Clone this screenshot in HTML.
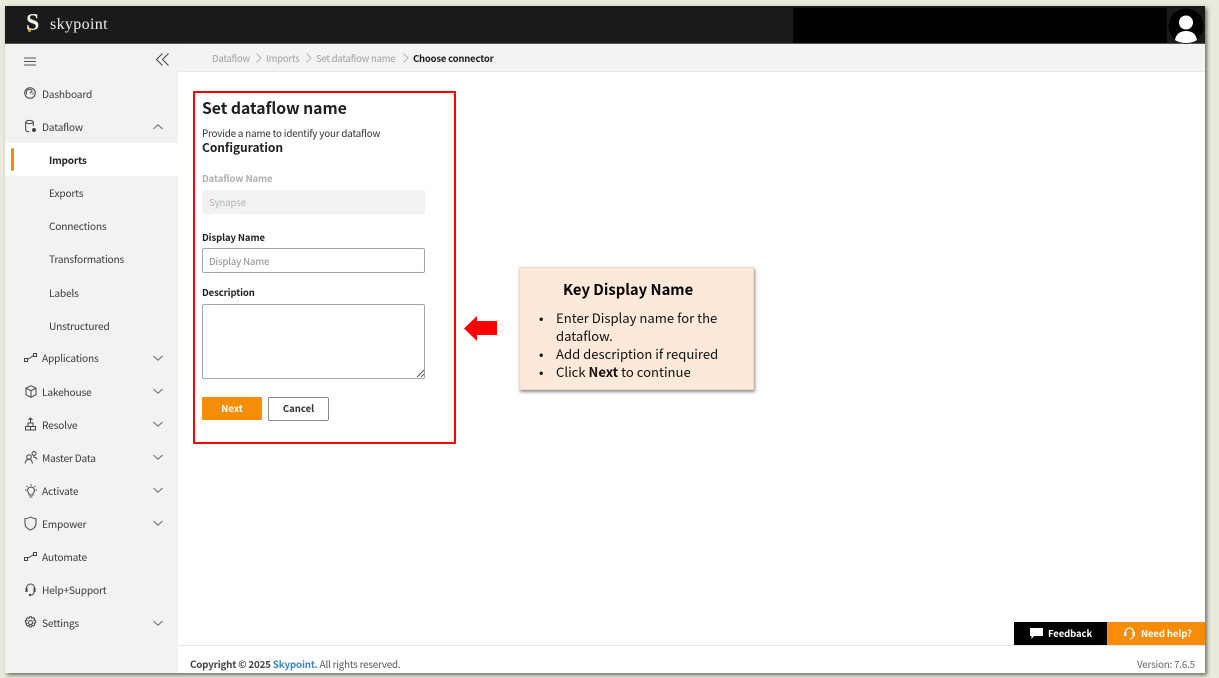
<!DOCTYPE html>
<html>
<head>
<meta charset="utf-8">
<style>
html,body{margin:0;padding:0;width:1219px;height:678px;overflow:hidden;background:#e9e9dc;}
*{box-sizing:border-box;}
body{font-family:"Noto Sans CJK JP","Liberation Sans",sans-serif;color:#323130;position:relative;}
.a{position:absolute;white-space:nowrap;line-height:16px;}
.n{font-size:10.2px;letter-spacing:-.2px;color:#3b3a39;}
.b{font-size:9.5px;letter-spacing:-.2px;color:#a19f9d;}
.l{font-size:9.500px;letter-spacing:-.1px;font-weight:700;color:#201f1e;}
.p{font-size:9.500px;letter-spacing:-.05px;}
.c{font-size:13.100px;line-height:18px;color:#111;}
svg{position:absolute;overflow:visible;}
.i{fill:none;stroke:#444;stroke-width:1;}
</style>
</head>
<body>
<!-- page frame -->
<div style="position:absolute;left:5px;top:6px;width:1200px;height:667px;background:#fff;box-shadow:2px 2px 4px rgba(0,0,0,.55);"></div>
<!-- header -->
<div style="position:absolute;left:5px;top:6px;width:1200px;height:38px;background:#1a1a1a;border-bottom:1px solid #555;"></div>
<div style="position:absolute;left:793px;top:8px;width:374px;height:35px;background:#000;"></div>
<div class="a" style="left:26px;top:9px;font:bold 24px/28px 'Liberation Serif',serif;color:#f4f0e6;">S</div>
<div style="position:absolute;left:28px;top:29px;width:3px;height:3px;border-radius:50%;background:#f7a11a;"></div>
<div class="a" style="left:50px;top:15px;font:16px/20px 'Liberation Serif',serif;color:#eee;letter-spacing:.35px;">skypoint</div>
<svg style="left:1168px;top:8px" width="36" height="36" viewBox="0 0 36 36"><circle cx="18" cy="18" r="17.500" fill="#000"/><circle cx="18" cy="14.500" r="7" fill="#fff"/><path d="M7 32c1-6 5-9 11-9s10 3 11 9c-3 2-7 3-11 3s-8-1-11-3z" fill="#fff"/></svg>

<!-- sidebar -->
<div style="position:absolute;left:5px;top:44px;width:173px;height:629px;background:#f2f2f2;"></div>
<div style="position:absolute;left:5px;top:143px;width:173px;height:33px;background:#fff;"></div>
<div style="position:absolute;left:11px;top:148px;width:3px;height:23px;background:#f78c07;border-radius:2px;"></div>

<svg style="left:24px;top:57px" width="13" height="9"><path d="M0 1h12M0 4.500h12M0 8h12" stroke="#555" stroke-width="1"/></svg>
<svg style="left:156px;top:53px" width="13" height="13" viewBox="0 0 13 13"><path d="M6.500 .5L.5 6.500l6 6M12.500 .5l-6 6 6 6" fill="none" stroke="#444"/></svg>

<div class="a n" style="left:42px;top:86px">Dashboard</div>
<div class="a n" style="left:42px;top:119px">Dataflow</div>
<div class="a n" style="left:49px;top:152px;font-weight:700;color:#222;font-size:10px">Imports</div>
<div class="a n" style="left:49px;top:185px">Exports</div>
<div class="a n" style="left:49px;top:218px">Connections</div>
<div class="a n" style="left:49px;top:251px">Transformations</div>
<div class="a n" style="left:49px;top:285px">Labels</div>
<div class="a n" style="left:49px;top:318px">Unstructured</div>
<div class="a n" style="left:42px;top:350px">Applications</div>
<div class="a n" style="left:42px;top:384px">Lakehouse</div>
<div class="a n" style="left:42px;top:417px">Resolve</div>
<div class="a n" style="left:42px;top:450px">Master Data</div>
<div class="a n" style="left:42px;top:483px">Activate</div>
<div class="a n" style="left:42px;top:516px">Empower</div>
<div class="a n" style="left:42px;top:549px">Automate</div>
<div class="a n" style="left:42px;top:582px">Help+Support</div>
<div class="a n" style="left:42px;top:615px">Settings</div>

<!-- nav icons -->
<svg style="left:24px;top:87px" width="12" height="12" viewBox="0 0 12 12"><circle class="i" cx="6" cy="6" r="5.300" stroke-width="1.200"/><path class="i" d="M3 7.500a3.200 3.200 0 0 1 5-4M9 5.500a3.200 3.200 0 0 1 0 2"/><path class="i" d="M6 6.500l2.500-3"/></svg>
<svg style="left:25px;top:120px" width="12" height="13" viewBox="0 0 12 13"><ellipse class="i" cx="4.500" cy="2" rx="3.800" ry="1.600"/><path class="i" d="M.7 2v8c0 1 1.500 1.600 3.500 1.600M8.300 2v4"/><circle cx="9" cy="10" r="2" fill="#444"/></svg>
<svg style="left:24px;top:353px" width="13" height="9" viewBox="0 0 13 9"><rect class="i" x=".5" y="5.500" width="3" height="3"/><rect class="i" x="9.500" y=".5" width="3" height="3"/><path class="i" d="M3.500 6.500L9.500 2.500"/></svg>
<svg style="left:25px;top:385px" width="12" height="13" viewBox="0 0 12 13"><path class="i" d="M6 .7l5 2.500v6.500l-5 2.600-5-2.600V3.200zM1 3.200l5 2.600 5-2.600M6 5.800v6.500"/></svg>
<svg style="left:24px;top:417px" width="13" height="14" viewBox="0 0 13 14"><path class="i" d="M6.500 6V1M4.500 3l2-2 2 2"/><rect class="i" x="4" y="6" width="5" height="3.500"/><rect class="i" x="1.500" y="9.500" width="5" height="3.500"/><rect class="i" x="6.500" y="9.500" width="5" height="3.500"/></svg>
<svg style="left:24px;top:451px" width="14" height="13" viewBox="0 0 14 13"><circle class="i" cx="5" cy="6" r="2.300"/><circle class="i" cx="10" cy="2.500" r="2"/><path class="i" d="M1 12.500c.5-3 2-4.300 4-4.300s3 1.300 3.500 4.300M9 6c2 0 3.500.5 4 2.500"/></svg>
<svg style="left:24px;top:484px" width="14" height="14" viewBox="0 0 14 14"><path class="i" d="M7 3a3.500 3.500 0 0 0-2 6.300V11h4V9.300A3.500 3.500 0 0 0 7 3zM5.500 13h3M7 0v1.500M1 6h1.500M11.500 6H13M2.500 2l1 1M11.500 2l-1 1"/></svg>
<svg style="left:24px;top:516px" width="13" height="15" viewBox="0 0 13 15"><path class="i" stroke-width="1.200" d="M6.500 1c2 1.200 3.500 1.600 5.500 1.700v5c0 3-2.300 5-5.500 6.300C3.300 12.700 1 10.700 1 7.700v-5C3 2.600 4.500 2.200 6.500 1z"/></svg>
<svg style="left:24px;top:552px" width="13" height="9" viewBox="0 0 13 9"><rect class="i" x=".5" y="5.500" width="3" height="3"/><rect class="i" x="9.500" y=".5" width="3" height="3"/><path class="i" d="M3.500 6.500L9.500 2.500"/></svg>
<svg style="left:25px;top:583px" width="11" height="14" viewBox="0 0 11 14"><path class="i" stroke-width="1.300" d="M1.500 8V5a4 4 0 0 1 8 0v3"/><rect x=".5" y="5" width="2" height="4" fill="#444"/><rect x="8.500" y="5" width="2" height="4" fill="#444"/><path class="i" d="M9 9c0 2-1.500 3-3.500 3"/><circle cx="5" cy="12" r="1.200" fill="#444"/></svg>
<svg style="left:24px;top:616px" width="13" height="13" viewBox="0 0 13 13"><circle class="i" cx="6.500" cy="6.500" r="2"/><path class="i" d="M5.500.7h2l.4 1.700 1.500-.9 1.400 1.400-.9 1.500 1.700.4v2l-1.700.4.9 1.500-1.400 1.400-1.500-.9-.4 1.700h-2l-.4-1.700-1.500.9-1.400-1.400.9-1.500-1.700-.4v-2l1.700-.4-.9-1.500 1.400-1.400 1.500.9z"/></svg>

<!-- chevrons -->
<svg style="left:153px;top:124px" width="10" height="6"><path d="M.5 5L5 .8 9.500 5" fill="none" stroke="#666"/></svg>
<svg style="left:153px;top:355px" width="10" height="6"><path d="M.5 1L5 5.200 9.500 1" fill="none" stroke="#666"/></svg>
<svg style="left:153px;top:388px" width="10" height="6"><path d="M.5 1L5 5.200 9.500 1" fill="none" stroke="#666"/></svg>
<svg style="left:153px;top:421px" width="10" height="6"><path d="M.5 1L5 5.200 9.500 1" fill="none" stroke="#666"/></svg>
<svg style="left:153px;top:454px" width="10" height="6"><path d="M.5 1L5 5.200 9.500 1" fill="none" stroke="#666"/></svg>
<svg style="left:153px;top:487px" width="10" height="6"><path d="M.5 1L5 5.200 9.500 1" fill="none" stroke="#666"/></svg>
<svg style="left:153px;top:520px" width="10" height="6"><path d="M.5 1L5 5.200 9.500 1" fill="none" stroke="#666"/></svg>
<svg style="left:153px;top:620px" width="10" height="6"><path d="M.5 1L5 5.200 9.500 1" fill="none" stroke="#666"/></svg>

<!-- breadcrumb -->
<div style="position:absolute;left:178px;top:44px;width:1027px;height:28px;background:#f3f3f3;border-bottom:1px solid #e8e8e8;"></div>
<div class="a b" style="left:212px;top:50px;">Dataflow</div>
<div class="a b" style="left:266px;top:50px;">Imports</div>
<div class="a b" style="left:316px;top:50px;">Set dataflow name</div>
<div class="a b" style="left:413px;top:50px;font-weight:700;color:#201f1e">Choose connector</div>
<svg style="left:256px;top:53px" width="6" height="10"><path d="M.5.500L5 5 .5 9.500" fill="none" stroke="#b5b3b1"/></svg>
<svg style="left:306px;top:53px" width="6" height="10"><path d="M.5.500L5 5 .5 9.500" fill="none" stroke="#b5b3b1"/></svg>
<svg style="left:403px;top:53px" width="6" height="10"><path d="M.5.500L5 5 .5 9.500" fill="none" stroke="#b5b3b1"/></svg>

<!-- red box -->
<div style="position:absolute;left:193px;top:91px;width:263px;height:353px;border:2px solid #f00;"></div>
<div class="a" style="left:202px;top:97px;font-size:15.800px;line-height:22px;font-weight:700;letter-spacing:-.05px;color:#201f1e">Set dataflow name</div>
<div class="a" style="left:202px;top:125px;font-size:9.800px;letter-spacing:-.17px;color:#323130">Provide a name to identify your dataflow</div>
<div class="a" style="left:202px;top:139px;font-size:12px;line-height:18px;font-weight:700;letter-spacing:-.05px;color:#201f1e">Configuration</div>
<div class="a l" style="left:202px;top:170px;color:#b3b0ad">Dataflow Name</div>
<div style="position:absolute;left:202px;top:190px;width:223px;height:24px;background:#f3f2f1;border-radius:2px;"></div>
<div class="a p" style="left:209px;top:194px;color:#b3b0ad">Synapse</div>
<div class="a l" style="left:202px;top:229px;">Display Name</div>
<div style="position:absolute;left:202px;top:248px;width:223px;height:25px;background:#fff;border:1px solid #a6a6a6;border-radius:2px;"></div>
<div class="a p" style="left:209px;top:253px;color:#8a8886">Display Name</div>
<div class="a l" style="left:202px;top:284px;">Description</div>
<div style="position:absolute;left:202px;top:304px;width:223px;height:75px;background:#fff;border:1px solid #a6a6a6;border-radius:2px;"></div>
<svg style="left:417px;top:370px" width="7" height="7"><path d="M0 7L7 0M4 7L7 4" stroke="#555" stroke-width="1"/></svg>
<div style="position:absolute;left:202px;top:397px;width:60px;height:23px;background:#f78c07;border-radius:1px;color:#fff;font-size:9.500px;font-weight:700;text-align:center;line-height:23px;">Next</div>
<div style="position:absolute;left:268px;top:397px;width:61px;height:24px;background:#fff;border:1px solid #8a8886;border-radius:2px;color:#323130;font-size:9.500px;font-weight:700;text-align:center;line-height:21px;">Cancel</div>

<!-- arrow -->
<svg style="left:464px;top:316px" width="34" height="26" viewBox="0 0 34 26"><path d="M0 12.500L13 0v5h20v14H13v6z" fill="#f00"/></svg>

<!-- callout -->
<div style="position:absolute;left:519px;top:267px;width:235px;height:123px;background:#fde9d9;border:1px solid #f0d8c6;box-shadow:1px 2px 3px rgba(0,0,0,.45);"></div>
<div class="a" style="left:563px;top:281px;font-size:14.800px;line-height:18px;font-weight:700;color:#000">Key Display Name</div>
<div class="a c" style="left:539px;top:309px;color:#000">•</div>
<div class="a c" style="left:556px;top:309px;">Enter Display name for the</div>
<div class="a c" style="left:556px;top:327px;">dataflow.</div>
<div class="a c" style="left:539px;top:345px;color:#000">•</div>
<div class="a c" style="left:556px;top:345px;">Add description if required</div>
<div class="a c" style="left:539px;top:363px;color:#000">•</div>
<div class="a c" style="left:556px;top:363px;">Click <b>Next</b> to continue</div>

<!-- footer -->
<div style="position:absolute;left:178px;top:645px;width:1027px;height:1px;background:#e6e6e6;"></div>
<div class="a" style="left:190px;top:656px;font-size:9.800px;letter-spacing:-.19px;color:#555"><b style="color:#444">Copyright © 2025 <span style="color:#3c87bd">Skypoint.</span></b> All rights reserved.</div>
<div class="a" style="left:1137px;top:656px;font-size:9.800px;letter-spacing:-.19px;color:#666">Version: 7.6.5</div>

<!-- feedback -->
<div style="position:absolute;left:1014px;top:622px;width:93px;height:23px;background:#000;"></div>
<div style="position:absolute;left:1107px;top:622px;width:98px;height:23px;background:#f78c07;"></div>
<svg style="left:1030px;top:628px" width="13" height="11" viewBox="0 0 13 11"><path d="M0 0h13v8H4l-2.500 3V8H0z" fill="#fff"/></svg>
<div class="a" style="left:1048px;top:625px;font-size:9.500px;letter-spacing:-.1px;font-weight:700;color:#fff">Feedback</div>
<svg style="left:1124px;top:627px" width="11" height="13" viewBox="0 0 11 13"><path d="M1.500 7V5a4 4 0 0 1 8 0v2" fill="none" stroke="#fff" stroke-width="1.300"/><rect x="0" y="5" width="2.500" height="4" fill="#fff"/><rect x="8.500" y="5" width="2.500" height="4" fill="#fff"/><path d="M9 9c0 2-1.500 3-3.500 3" fill="none" stroke="#fff"/></svg>
<div class="a" style="left:1141px;top:625px;font-size:9.500px;letter-spacing:-.1px;font-weight:700;color:#fff">Need help?</div>
</body>
</html>
